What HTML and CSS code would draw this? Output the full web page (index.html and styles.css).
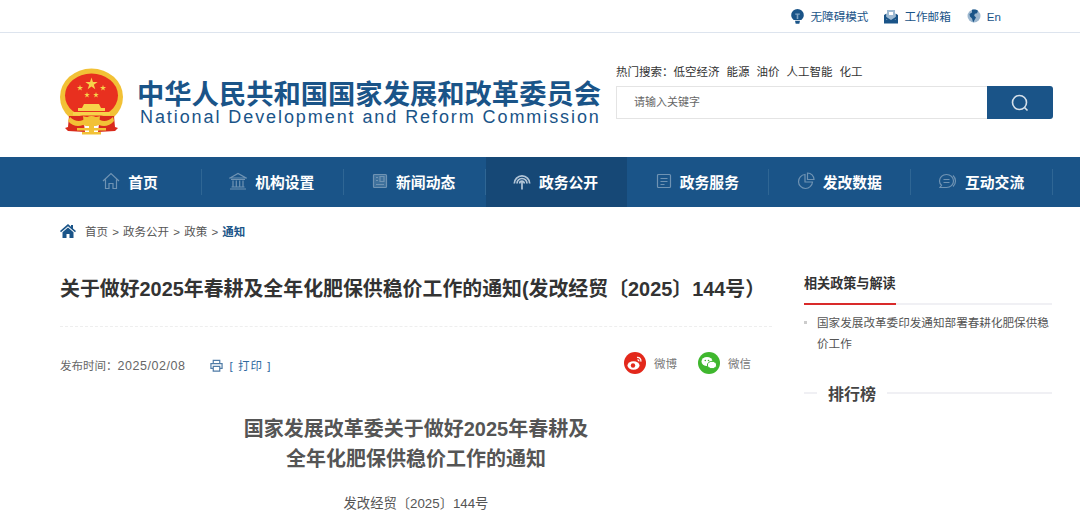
FILE: index.html
```html
<!DOCTYPE html>
<html lang="zh">
<head>
  <meta charset="UTF-8">
  <title>国家发展改革委</title>
  <meta name="viewport" content="width=device-width, initial-scale=1.0">
  <link rel="stylesheet" href="styles.css">
</head>
<body>
  <div class="topbar">
    <a class="top-link">
      <svg width="13" height="15" viewBox="0 0 13 15"><path fill="#1a5488" d="M6.500 0a6.300 6.300 0 0 0-6.300 6.300c0 2.300 1.300 3.500 2.500 4.700h7.600c1.200-1.200 2.500-2.400 2.500-4.700A6.300 6.300 0 0 0 6.500 0z"/><path fill="#1a5488" d="M4 11.800h5l-.7 3H4.700z"/><path fill="#7fa3c4" d="M4.200 4.500h4.600v1.300H7.300v4.200H5.700V5.800H4.200z"/></svg>
      无障碍模式
    </a>
    <a class="top-link">
      <svg width="14" height="15" viewBox="0 0 14 15"><path fill="#1a5488" d="M0 6 2.500 4.500V11h9V4.500L14 6v8.500H0z"/><path fill="#9db9d2" d="M3 1h8v8.500L7 11.500 3 9.500z"/><path fill="#fff" d="M5 3h4v3H5z"/><path fill="#1a5488" d="M0 6.500 7 11l7-4.500V9L7 13 0 9z"/></svg>
      工作邮箱
    </a>
    <a class="top-link">
      <svg width="14" height="14" viewBox="0 0 14 14"><circle cx="7" cy="7" r="6.500" fill="#9db7cf"/><path fill="#1a5488" d="M5 .8c2-.7 4.500-.4 6 .9l-1 2.500-2.200.6-.6 2 1.800 1.600L7.500 11l-1.300 2.400L5 9.500 3 7.500 2.500 5 5 3.500z"/></svg>
      En
    </a>
  </div>

  <header class="masthead">
    <div class="logo">
      <svg class="emblem" width="64" height="68" viewBox="0 0 64 68">
        <defs>
          <polygon id="star" points="0,-1 .22,-.31 .95,-.31 .36,.12 .59,.81 0,.38 -.59,.81 -.36,.12 -.95,-.31 -.22,-.31"/>
        </defs>
        <ellipse cx="31.500" cy="29" rx="31.500" ry="28.500" fill="#f2c136"/>
        <ellipse cx="31.500" cy="27.500" rx="26.500" ry="22" fill="#e8301f"/>
        <g fill="#f7d34a">
          <use href="#star" transform="translate(31.500 16) scale(6.500)"/>
          <use href="#star" transform="translate(20 20) scale(3.200)"/>
          <use href="#star" transform="translate(43 20) scale(3.200)"/>
          <use href="#star" transform="translate(27 27) scale(3)"/>
          <use href="#star" transform="translate(36 27) scale(3)"/>
          <path d="M24 36h15l2 4H22zM18 40h27v3H18zM13 44h37v3.500H13z"/>
        </g>
        <path fill="#d92a1c" d="M9 48h14l2 16-17-1-3-3 3-1zM40 48h14l1 11 3 1-3 3-17 1z"/>
        <path fill="#f2c136" d="M10 49c4 4 9 5 13 3 3-2 5-4 8.500-4s5.500 2 8.500 4c4 2 9 1 13-3l1 4c-4 5-10 6-15 4l-3 1H26l-3-1c-5 2-11 1-15-4z"/>
        <path fill="#f2c136" d="M17 60h29v2.500H17zM22 64h19v2.500H22zM29 58h5v8h-5z"/>
      </svg>
      <div class="logo-text">
        <div class="logo-cn">中华人民共和国国家发展和改革委员会</div>
        <div class="logo-en">National Development and Reform Commission</div>
      </div>
    </div>
    <div class="search-wrap">
      <div class="hot">
        <span>热门搜索：</span><span>低空经济</span><span>能源</span><span>油价</span><span>人工智能</span><span>化工</span>
      </div>
      <div class="search">
        <div class="search-input">请输入关键字</div>
        <div class="search-btn">
          <svg width="18" height="18" viewBox="0 0 18 18" fill="none" stroke="#d5e0ea" stroke-width="1.600"><circle cx="8.500" cy="8.500" r="7"/><path d="m13.500 13.500 3 3"/></svg>
        </div>
      </div>
    </div>
  </header>

  <nav class="nav">
    <a class="nav-item">
      <svg width="18" height="18" viewBox="0 0 18 18" fill="none" stroke="#6f93b3" stroke-width="1.200"><path d="M1 9 9 1.500 17 9M3.500 7.500V16.500H7v-5h4v5h3.500V7.500"/></svg>
      首页
    </a>
    <a class="nav-item">
      <svg width="18" height="18" viewBox="0 0 18 18" fill="none" stroke="#6f93b3" stroke-width="1.200"><path d="M1 6 9 1.500 17 6zM2 7.500h14M4 8.500v6M7.300 8.500v6M10.700 8.500v6M14 8.500v6M2.500 15h13M1 17h16"/></svg>
      机构设置
    </a>
    <a class="nav-item">
      <svg width="16" height="16" viewBox="0 0 16 16" fill="#3f719c" stroke="#6f93b3" stroke-width="1.200"><rect x="1.500" y="1.500" width="13" height="13" rx="1"/><path fill="none" d="M4 11.500h8M8 3.500h4v5H8zM4 4.500h2M4 7.500h2"/></svg>
      新闻动态
    </a>
    <a class="nav-item active">
      <svg width="18" height="18" viewBox="0 0 18 18" fill="none" stroke="#b3c6d8" stroke-width="1.700"><path d="M1.300 11.500a7.700 7.700 0 0 1 15.400 0M4 11.500a5 5 0 0 1 10 0M6.700 11.500a2.300 2.300 0 0 1 4.600 0M9 9.500V17.500"/></svg>
      政务公开
    </a>
    <a class="nav-item">
      <svg width="16" height="16" viewBox="0 0 16 16" fill="none" stroke="#6f93b3" stroke-width="1.200"><rect x="1.500" y="1.500" width="13" height="13" rx="1"/><path d="M4.500 5.500h7M4.500 8.500h7M4.500 11.500h4"/></svg>
      政务服务
    </a>
    <a class="nav-item">
      <svg width="18" height="18" viewBox="0 0 18 18" fill="none" stroke="#6f93b3" stroke-width="1.200"><path d="M8 2.500a7 7 0 1 0 7.500 7.500H8z"/><path d="M10.500 1a6.500 6.500 0 0 1 6.500 6.500h-6.500z"/></svg>
      发改数据
    </a>
    <a class="nav-item">
      <svg width="19" height="17" viewBox="0 0 19 17" fill="none" stroke="#6f93b3" stroke-width="1.200"><path d="M8.500 1.500c4 0 7 2.800 7 6.500s-3 6.500-7 6.500H2l1.500-2.200C2 11 1.500 9.600 1.500 8c0-3.700 3-6.500 7-6.500z"/><path d="M5.500 6.500h6M5.500 9.500h6M15 2.500c1.500 1.400 2.500 3.300 2.500 5.500s-1 4.100-2.500 5.500"/></svg>
      互动交流
    </a>
  </nav>

  <div class="crumbs">
    <svg width="16" height="14" viewBox="0 0 16 14"><path fill="#1a5488" d="M8 0 0 7l1 1.200L8 2.300l7 5.900L16 7l-3-2.600V1h-2v1.700zM8 3.600 2.500 8.200V14H6.500V10h3v4h4V8.200z"/></svg>
    <span class="crumb-links">首页 &gt; 政务公开 &gt; 政策 &gt; <b>通知</b></span>
  </div>

  <div class="content">
    <main class="article">
      <h1 class="title">关于做好2025年春耕及全年化肥保供稳价工作的通知(发改经贸〔2025〕144号）</h1>
      <div class="meta">
        <span class="date">发布时间：<span class="date-num">2025/02/08</span></span>
        <a class="print">
          <svg width="13" height="13" viewBox="0 0 14 13" fill="none" stroke="#4f7ba6" stroke-width="1.300"><path d="M3.500 4V1h7v3M3 9.500H1V4.500h12v5h-2M3.500 7.500h7v5h-7z"/></svg>
          <span>[ 打印 ]</span>
        </a>
        <div class="share">
          <a class="share-item">
            <svg width="22" height="22" viewBox="0 0 22 22"><circle cx="11" cy="11" r="11" fill="#e3281b"/><ellipse cx="9.500" cy="13.500" rx="6" ry="4.200" fill="#fff"/><circle cx="9" cy="13.500" r="2.200" fill="#e3281b"/><path fill="none" stroke="#fff" stroke-width="1.300" d="M13 5.500c2.400-.4 4.500 1.600 3.800 4.200M13.500 8c1-.2 1.500.5 1.300 1.400"/></svg>
            微博
          </a>
          <a class="share-item">
            <svg width="22" height="22" viewBox="0 0 22 22"><circle cx="11" cy="11" r="11" fill="#3fb72e"/><ellipse cx="9" cy="9.500" rx="5.500" ry="4.500" fill="#fff"/><ellipse cx="14" cy="13" rx="4.600" ry="3.700" fill="#fff" stroke="#3fb72e"/><circle cx="7.300" cy="8.500" r=".8" fill="#3fb72e"/><circle cx="10.500" cy="8.500" r=".8" fill="#3fb72e"/></svg>
            微信
          </a>
        </div>
      </div>
      <div class="doc">
        <h2 class="doc-title">国家发展改革委关于做好2025年春耕及<br>全年化肥保供稳价工作的通知</h2>
        <p class="doc-no">发改经贸〔2025〕144号</p>
      </div>
    </main>
    <aside class="side">
      <div class="side-head"><span>相关政策与解读</span></div>
      <ul class="side-list">
        <li>国家发展改革委印发通知部署春耕化肥保供稳价工作</li>
      </ul>
      <div class="rank"><span>排行榜</span></div>
    </aside>
  </div>
</body>
</html>
```

FILE: styles.css
```css
:root {
  --blue: #1a5488;
  --dark-blue: #164876;
  --text: #333333;
  --gray: #666666;
}

* {
  box-sizing: border-box;
}

html, body {
  height: 518px;
  overflow: hidden;
}

body {
  margin: 0;
  background-color: #fff;
  color: var(--text);
  font-family: "Liberation Sans", "Noto Sans CJK SC", sans-serif;
}

/* top bar */
.topbar {
  height: 33px;
  border-bottom: 1px solid #dde4ee;
  display: flex;
  justify-content: flex-end;
  align-items: center;
  gap: 16px;
  padding-right: 79px;
}

.top-link {
  display: flex;
  align-items: center;
  gap: 6px;
  font-size: 11.600px;
  color: var(--blue);
}

/* header */
.masthead {
  height: 124px;
  padding: 31px 27px 0 60px;
  display: flex;
  justify-content: space-between;
}

.logo {
  display: flex;
  align-items: flex-start;
  gap: 13px;
  padding-top: 4px;
}

.logo-cn {
  font-size: 27.300px;
  line-height: 26px;
  font-weight: 700;
  color: var(--blue);
  white-space: nowrap;
  margin-top: 14px;
}

.logo-en {
  font-size: 18px;
  line-height: 18px;
  letter-spacing: 1.920px;
  color: var(--blue);
  white-space: nowrap;
  margin-left: 3px;
}

.search-wrap {
  width: 437px;
}

.hot {
  display: flex;
  font-size: 11.500px;
  line-height: 16px;
  color: var(--text);
  margin-bottom: 6px;
}

.hot span {
  margin-right: 7px;
}

.hot span:first-child {
  margin-right: 0;
}

.search {
  display: flex;
  height: 33px;
}

.search-input {
  flex: 1;
  border: 1px solid #e4e4e4;
  border-right: none;
  padding-left: 17px;
  font-size: 11px;
  line-height: 31px;
  color: var(--gray);
}

.search-btn {
  width: 66px;
  background-color: var(--blue);
  border-radius: 0 3px 3px 0;
  display: flex;
  align-items: center;
  justify-content: center;
}

/* nav */
.nav {
  height: 50px;
  background-color: var(--blue);
  padding: 0 27px 0 60px;
  display: flex;
}

.nav-item {
  flex: 1;
  display: flex;
  align-items: center;
  justify-content: center;
  gap: 8px;
  padding: 0 2px 2px 0;
  font-size: 14.800px;
  font-weight: 700;
  color: #fff;
  position: relative;
}

.nav-item::after {
  content: "";
  position: absolute;
  right: 0;
  top: 12px;
  height: 26px;
  width: 1px;
  background-color: #2f6694;
}

.nav-item.active {
  background-color: var(--dark-blue);
}

.nav-item.active::after {
  display: none;
}

/* breadcrumb */
.crumbs {
  height: 50px;
  padding: 0 0 2px 60px;
  display: flex;
  align-items: center;
  gap: 9px;
  font-size: 11.500px;
  word-spacing: 1px;
  color: #555;
}

.crumb-links b {
  color: var(--blue);
}

/* content */
.content {
  padding: 0 28px 0 60px;
  display: flex;
  justify-content: space-between;
}

.article {
  width: 712px;
}

.title {
  margin: 0;
  padding: 15px 0 20px;
  font-size: 19.900px;
  line-height: 34px;
  font-weight: 700;
  color: var(--text);
  border-bottom: 1px dashed #eeeeee;
  white-space: nowrap;
}

.meta {
  height: 72px;
  display: flex;
  align-items: center;
  font-size: 11.500px;
  color: var(--gray);
  padding-right: 21px;
}

.date {
  margin-top: 4px;
}

.date-num {
  font-size: 12.500px;
  letter-spacing: .55px;
}

.print {
  margin: 4px 0 0 24px;
  display: flex;
  align-items: center;
  gap: 7px;
  color: #2f6a9f;
  letter-spacing: 1px;
}

.share {
  margin-left: auto;
  display: flex;
  gap: 21px;
}

.share-item {
  display: flex;
  align-items: center;
  gap: 8px;
  color: #777;
}

.doc {
  text-align: center;
  padding-top: 15px;
}

.doc-title {
  margin: 0;
  font-size: 20px;
  line-height: 30px;
  font-weight: 700;
  color: #555;
}

.doc-no {
  margin: 20px 0 0;
  font-size: 13.300px;
  line-height: 20px;
  color: #555;
}

/* sidebar */
.side {
  width: 248px;
}

.side-head {
  border-bottom: 2px solid #f0f0f4;
  height: 48px;
  padding-top: 17px;
  font-size: 13.100px;
  line-height: 20px;
  font-weight: 700;
}

.side-head span {
  display: inline-block;
  height: 31px;
  border-bottom: 2px solid #d92a2a;
}

.side-list {
  list-style: none;
  margin: 0;
  padding: 0 0 0 13px;
  font-size: 11.600px;
  line-height: 21px;
  color: #555;
}

.side-list li {
  position: relative;
  padding-top: 7px;
}

.side-list li::before {
  content: "";
  position: absolute;
  left: -13px;
  top: 16px;
  width: 3px;
  height: 3px;
  background-color: #ccc;
}

.rank {
  display: flex;
  align-items: center;
  margin-top: 27px;
  font-size: 16px;
  font-weight: 700;
  color: #444;
}

.rank::before,
.rank::after {
  content: "";
  height: 2px;
  background-color: #f0f0f4;
}

.rank::before {
  width: 13px;
}

.rank::after {
  flex: 1;
}

.rank span {
  padding: 0 11px;
}
```
